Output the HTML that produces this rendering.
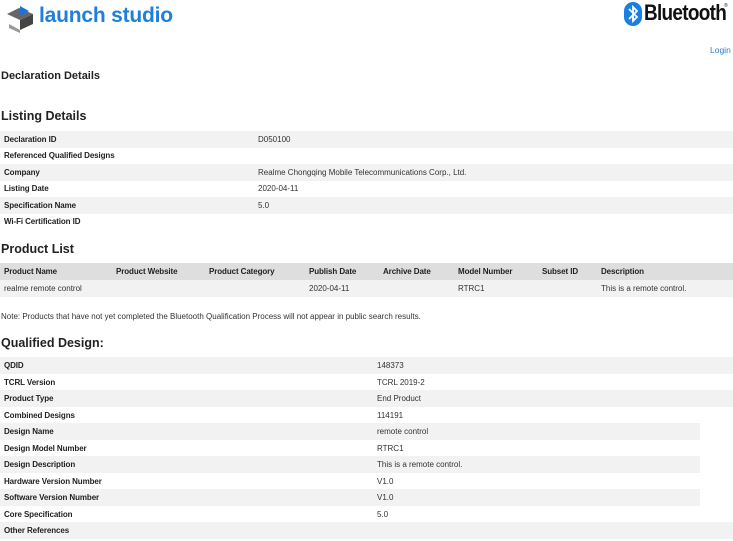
<!DOCTYPE html>
<html><head><meta charset="utf-8"><style>
*{margin:0;padding:0;box-sizing:border-box}
body{width:733px;height:541px;background:#fff;position:relative;overflow:hidden;font-family:"Liberation Sans",Arial,sans-serif;color:#222}
.a{position:absolute;white-space:nowrap}
.r{position:absolute;left:0;height:17px;font-size:8px;line-height:17px}
.s{background:#f2f2f2}
.l{position:absolute;left:4px;color:#222;font-weight:bold;letter-spacing:-0.1px}
.v{position:absolute;color:#333}
h{position:absolute;font-weight:bold;white-space:nowrap;color:#222}
</style></head><body>
<svg class="a" style="left:6px;top:5px" width="30" height="28" viewBox="0 0 30 28">
<polygon points="1,9 13,3 27,9 14,15" fill="#666"/>
<polygon points="14,15 27,9 27,19 14,25" fill="#444"/>
<polygon points="3,19 14,25 14,28 3,23" fill="#999"/>
<polygon points="14,1 23,6 14,11" fill="#1a73d9"/>
</svg>
<div class="a" style="left:39px;top:4px;font-size:21px;font-weight:bold;color:#1f7fdc;letter-spacing:-0.2px">launch studio</div>
<svg class="a" style="left:624px;top:2px" width="18" height="24" viewBox="0 0 18 24"><rect x="0" y="0" width="18" height="24" rx="9" fill="#1a7fe0"/><path d="M5 7 L13 15 L9 19 L9 5 L13 9 L5 17" stroke="#fff" stroke-width="1.8" fill="none"/></svg>
<div class="a" style="left:644px;top:0px;font-size:22px;font-weight:bold;color:#111;letter-spacing:-0.8px;transform:scaleX(0.86);transform-origin:left">Bluetooth</div>
<div class="a" style="left:724px;top:3px;font-size:5px">®</div>
<div class="a" style="left:710px;top:45px;font-size:8.5px;color:#2a7bc8">Login</div>
<h style="left:1px;top:70px;font-size:11px">Declaration Details</h>
<h style="left:1px;top:109px;font-size:12.5px">Listing Details</h>
<div class="r s" style="top:131px;width:733px"><span class="l">Declaration ID</span><span class="v" style="left:258px">D050100</span></div>
<div class="r" style="top:147px;width:733px"><span class="l">Referenced Qualified Designs</span></div>
<div class="r s" style="top:164px;width:733px"><span class="l">Company</span><span class="v" style="left:258px">Realme Chongqing Mobile Telecommunications Corp., Ltd.</span></div>
<div class="r" style="top:180px;width:733px"><span class="l">Listing Date</span><span class="v" style="left:258px">2020-04-11</span></div>
<div class="r s" style="top:197px;width:733px"><span class="l">Specification Name</span><span class="v" style="left:258px">5.0</span></div>
<div class="r" style="top:213px;width:733px"><span class="l">Wi-Fi Certification ID</span></div>
<h style="left:1px;top:242px;font-size:12.5px">Product List</h>
<div class="r" style="top:263px;width:733px;background:#dedede;font-weight:bold"><span class="l">Product Name</span><span class="l" style="left:116px">Product Website</span><span class="l" style="left:209px">Product Category</span><span class="l" style="left:309px">Publish Date</span><span class="l" style="left:383px">Archive Date</span><span class="l" style="left:458px">Model Number</span><span class="l" style="left:542px">Subset ID</span><span class="l" style="left:601px">Description</span></div>
<div class="r s" style="top:280px;width:733px"><span class="v" style="left:4px">realme remote control</span><span class="v" style="left:309px">2020-04-11</span><span class="v" style="left:458px">RTRC1</span><span class="v" style="left:601px">This is a remote control.</span></div>
<div class="a" style="left:1px;top:312px;font-size:8px;color:#333">Note: Products that have not yet completed the Bluetooth Qualification Process will not appear in public search results.</div>
<h style="left:1px;top:336px;font-size:12.5px">Qualified Design:</h>
<div class="r s" style="top:357px;width:733px"><span class="l">QDID</span><span class="v" style="left:377px">148373</span></div>
<div class="r" style="top:374px;width:733px"><span class="l">TCRL Version</span><span class="v" style="left:377px">TCRL 2019-2</span></div>
<div class="r s" style="top:390px;width:733px"><span class="l">Product Type</span><span class="v" style="left:377px">End Product</span></div>
<div class="r" style="top:407px;width:733px"><span class="l">Combined Designs</span><span class="v" style="left:377px">114191</span></div>
<div class="r s" style="top:423px;width:700px"><span class="l">Design Name</span><span class="v" style="left:377px">remote control</span></div>
<div class="r" style="top:440px;width:700px"><span class="l">Design Model Number</span><span class="v" style="left:377px">RTRC1</span></div>
<div class="r s" style="top:456px;width:700px"><span class="l">Design Description</span><span class="v" style="left:377px">This is a remote control.</span></div>
<div class="r" style="top:473px;width:700px"><span class="l">Hardware Version Number</span><span class="v" style="left:377px">V1.0</span></div>
<div class="r s" style="top:489px;width:700px"><span class="l">Software Version Number</span><span class="v" style="left:377px">V1.0</span></div>
<div class="r" style="top:506px;width:700px"><span class="l">Core Specification</span><span class="v" style="left:377px">5.0</span></div>
<div class="r s" style="top:522px;width:733px"><span class="l">Other References</span></div>
</body></html>
